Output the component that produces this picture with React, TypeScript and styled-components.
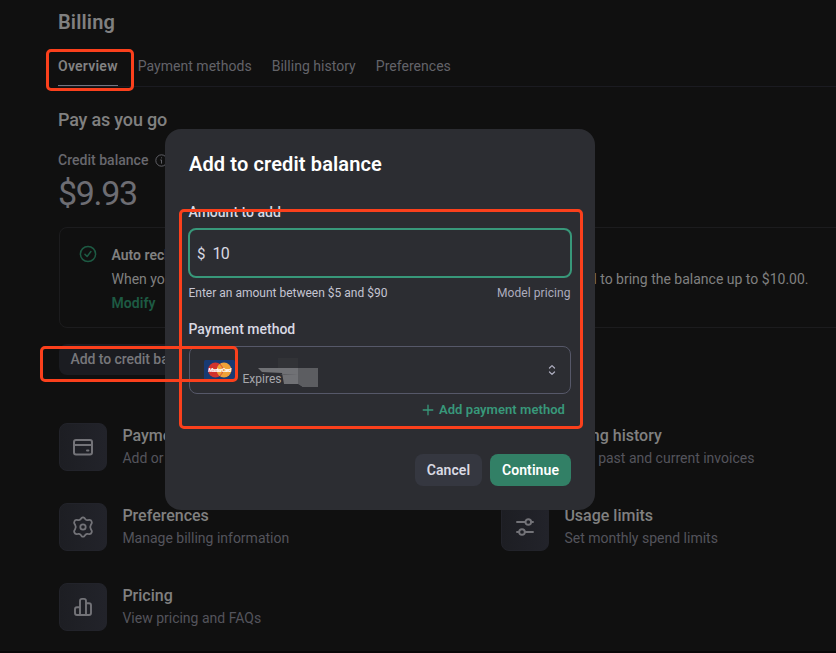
import React from 'react';
import styled, { createGlobalStyle } from 'styled-components';

const GlobalStyle = createGlobalStyle`
  * { box-sizing: border-box; }
  html, body { margin: 0; background: #101010; overflow: hidden; }
  body { font-family: Roboto, "Liberation Sans", sans-serif; font-size: 14px; line-height: 24px; color: #808080; }
  button, input { font: inherit; color: inherit; }
  h1, h2, h3, p { margin: 0; }
  svg { display: block; flex: none; }
`;

const Screen = styled.div`
  position: relative;
  width: 836px;
  height: 653px;
  overflow: hidden;
  background: #101010;
  border-bottom: 2px solid #080607;
`;

const Page = styled.main`
  display: flex;
  flex-direction: column;
  padding: 8px 0 0 58px;
  width: 945px;
`;

const Title = styled.h1`
  font-size: 20px;
  line-height: 28px;
  font-weight: 600;
  letter-spacing: 0.14px;
`;

const Tabs = styled.nav`
  display: flex;
  gap: 20px;
  height: 51px;
  padding-top: 18px;
  border-bottom: 1px solid #1b1b21;
`;

const Tab = styled.a<{ $active?: boolean }>`
  height: 32px;
  line-height: 24px;
  padding-bottom: 7px;
  font-weight: ${(p) => (p.$active ? 600 : 400)};
  letter-spacing: ${(p) => (p.$active ? 0.24 : 0.03)}px;
  color: ${(p) => (p.$active ? '#828282' : '#636369')};
  border-bottom: ${(p) => (p.$active ? '1px solid #747480' : '0')};
`;

const Section = styled.h2`
  margin-top: 19px;
  font-size: 18px;
  line-height: 28px;
  font-weight: 500;
  letter-spacing: -0.19px;
`;

const BalanceLabel = styled.div`
  display: flex;
  align-items: center;
  gap: 7px;
  margin-top: 14px;
  font-weight: 500;
  letter-spacing: 0.02px;
  color: #68686e;
`;

const Balance = styled.div`
  margin-top: 2px;
  font-size: 34px;
  line-height: 38px;
  letter-spacing: -1.3px;
  color: #6d6d73;
`;

const Recharge = styled.section`
  display: flex;
  gap: 14.5px;
  height: 101px;
  margin: 15px 0 0 1px;
  padding: 15px 19px;
  border: 1px solid #1c1c1e;
  border-radius: 8px;
`;

const RechargeBody = styled.div`
  display: flex;
  flex-direction: column;
`;

const RechargeTitle = styled.div`
  font-weight: 600;
`;

const RechargeText = styled.p`
  display: flex;
  justify-content: space-between;
  width: 697px;
  white-space: nowrap;
`;

const Modify = styled.a`
  font-weight: 600;
  letter-spacing: 0.06px;
  color: #1d5a43;
`;

const AddCredit = styled.button`
  align-self: flex-start;
  width: 160px;
  height: 31px;
  margin: 16px 0 0 1px;
  padding: 0 12px 1px 11.5px;
  border: 0;
  border-radius: 8px;
  background: #1b1c21;
  color: #77777b;
  font-weight: 500;
  letter-spacing: -0.06px;
  text-align: left;
  white-space: nowrap;
`;

const Links = styled.div`
  display: grid;
  grid-template-columns: 442px 442px;
  grid-auto-rows: 48px;
  row-gap: 32px;
  margin: 48px 0 0 1px;
`;

const LinkItem = styled.a`
  display: flex;
  gap: 15.4px;
`;

const IconTile = styled.div`
  display: flex;
  align-items: center;
  justify-content: center;
  width: 48px;
  height: 48px;
  border: 1px solid #22232a;
  border-radius: 8px;
  background: linear-gradient(90deg, #1d1e23, #22232a);
  color: #737378;
`;

const LinkText = styled.div`
  display: flex;
  flex-direction: column;
  padding-top: 1px;
  white-space: nowrap;
`;

const LinkTitle = styled.h3`
  font-size: 16px;
  line-height: 24px;
  font-weight: 500;
`;

const LinkNote = styled.p`
  margin-top: -2px;
  line-height: 24px;
  color: #54545c;
`;

const Modal = styled.section`
  position: absolute;
  left: 165px;
  top: 129px;
  display: flex;
  flex-direction: column;
  width: 430px;
  height: 381px;
  padding: 21px 24px 24px 23px;
  border-radius: 16px;
  background: #2c2d32;
  color: #d9d9e3;
`;

const ModalTitle = styled.h2`
  font-size: 20px;
  line-height: 28px;
  font-weight: 600;
  letter-spacing: 0.13px;
  padding-left: 1px;
  color: #ffffff;
`;

const Label = styled.label<{ $top: number }>`
  margin-top: ${(p) => p.$top}px;
  padding-left: 0.5px;
  font-weight: 500;
  line-height: 20px;
`;

const AmountField = styled.div`
  display: flex;
  align-items: center;
  gap: 7px;
  height: 50px;
  margin: 6px -1px 0 0;
  padding: 1px 7px 0;
  border: 2px solid #38987a;
  border-radius: 8px;
  font-size: 16px;
`;

const Currency = styled.span`
  font-size: 15px;
`;

const Amount = styled.input`
  width: 200px;
  padding: 0;
  border: 0;
  outline: 0;
  background: transparent;
  letter-spacing: -0.6px;
`;

const Hints = styled.div`
  display: flex;
  justify-content: space-between;
  margin-top: 5px;
  padding: 0 0.5px;
  font-size: 12px;
  line-height: 20px;
  color: #c5c5d2;
`;

const Pricing = styled.a`
  letter-spacing: 0.06px;
  color: #acacbe;
`;

const Method = styled.div`
  display: flex;
  align-items: center;
  height: 48px;
  margin: 7px 0 0 1px;
  padding: 0 14px;
  border: 1px solid #565869;
  border-radius: 8px;
`;

const CardInfo = styled.div`
  display: flex;
  flex: 1;
  align-self: stretch;
  align-items: flex-end;
  padding: 0 0 4px 7.5px;
  font-size: 12px;
  line-height: 20px;
  color: #a7a7ac;
`;

const Redaction = styled.svg`
  margin: 0 0 -2px -38.5px;
`;

const AddMethod = styled.a`
  display: flex;
  align-items: center;
  align-self: flex-end;
  gap: 5px;
  margin: 6px 6px 0 0;
  font-size: 13px;
  line-height: 20px;
  font-weight: 600;
  letter-spacing: 0.06px;
  color: #38987a;
`;

const Actions = styled.footer`
  display: flex;
  justify-content: flex-end;
  gap: 8px;
  margin-top: auto;
`;

const Button = styled.button<{ $primary?: boolean }>`
  width: ${(p) => (p.$primary ? 81 : 67)}px;
  height: 32px;
  padding: 0;
  border: 0;
  border-radius: 8px;
  background: ${(p) => (p.$primary ? '#328066' : '#353740')};
  color: ${(p) => (p.$primary ? '#ffffff' : '#d9d9e3')};
  font-weight: 600;
  letter-spacing: 0.07px;
`;

const Highlight = styled.div<{ $x: number; $y: number; $w: number; $h: number }>`
  position: absolute;
  left: ${(p) => p.$x}px;
  top: ${(p) => p.$y}px;
  width: ${(p) => p.$w}px;
  height: ${(p) => p.$h}px;
  border: 3px solid #fb401c;
  border-radius: 5px;
  pointer-events: none;
`;

const stroke = {
  fill: 'none',
  stroke: 'currentColor',
  strokeWidth: 2,
  strokeLinecap: 'round' as const,
  strokeLinejoin: 'round' as const,
};

const InfoIcon = () => (
  <svg width="13" height="13" viewBox="0 0 24 24" {...stroke} strokeWidth={1.7}>
    <circle cx="12" cy="12" r="10.5" />
    <path d="M10.5 11H12v6M12 7v.3" />
  </svg>
);

const CheckIcon = () => (
  <svg width="18" height="24" viewBox="0 0 18 24" {...stroke} stroke="#1d5a43" strokeWidth={1.5}>
    <circle cx="9" cy="11" r="7.6" />
    <path d="M6 11.4l2.1 2.1 3.8-5" />
  </svg>
);

const CardIcon = () => (
  <svg width="24" height="24" viewBox="0 0 24 24" {...stroke}>
    <rect x="3" y="5" width="18" height="14.5" rx="2" />
    <path d="M3 10h18M16 15.4h1.4" />
  </svg>
);

const GearIcon = () => (
  <svg width="24" height="24" viewBox="0 0 24 24" {...stroke} strokeWidth={1.8}>
    <path d="M10.4 3.2Q12 1.4 13.6 3.2L14.4 4.2Q15.4 5.4 17 5.1L18.3 4.9Q20 4.8 20.7 6.6Q21.2 7.8 20.4 8.9L19.9 9.7Q18.5 12 19.9 14.3L20.4 15.1Q21.2 16.2 20.7 17.4Q20 19.2 18.3 19.1L17 18.9Q15.4 18.6 14.4 19.8L13.6 20.8Q12 22.6 10.4 20.8L9.6 19.8Q8.6 18.6 7 18.9L5.7 19.1Q4 19.2 3.3 17.4Q2.8 16.2 3.6 15.1L4.1 14.3Q5.5 12 4.1 9.7L3.6 8.9Q2.8 7.8 3.3 6.6Q4 4.8 5.7 4.9L7 5.1Q8.6 5.4 9.6 4.2Z" />
    <circle cx="12" cy="12" r="2.7" />
  </svg>
);

const ChartIcon = () => (
  <svg width="24" height="24" viewBox="0 0 24 24" {...stroke} strokeWidth={1.9}>
    <path d="M9 20V5.9a2 2 0 0 1 2-2h2a2 2 0 0 1 2 2V20M9 12.2H6a2 2 0 0 0-2 2V18a2 2 0 0 0 2 2h12a2 2 0 0 0 2-2v-7.8a2 2 0 0 0-2-2h-3" />
  </svg>
);

const SlidersIcon = () => (
  <svg width="24" height="24" viewBox="0 0 24 24" {...stroke} strokeWidth={1.9}>
    <path d="M4 7h8M19 7h1M4 17h2M12 17h8" />
    <circle cx="15.3" cy="7" r="2.8" />
    <circle cx="9" cy="17" r="2.8" />
  </svg>
);

const CardLogo = () => (
  <svg width="31" height="20" viewBox="0 0 31 20">
    <rect width="31" height="20" rx="1.5" fill="#183a72" />
    <circle cx="11.4" cy="10" r="7.4" fill="#d2332d" />
    <circle cx="20" cy="10" r="7.4" fill="#eda139" />
    <path d="M15.7 4a7.4 7.4 0 0 1 0 12" fill="none" stroke="#d2332d" strokeWidth=".8" />
    <text x="15.8" y="12.2" fontFamily="Roboto, sans-serif" fontSize="5.6" fontWeight="900" fontStyle="italic" fill="#fff" textAnchor="middle" textLength="23">MasterCard</text>
  </svg>
);

const links = [
  { title: 'Payment methods', note: 'Add or change payment method', icon: <CardIcon /> },
  { title: 'Billing history', note: 'View past and current invoices', icon: <CardIcon /> },
  { title: 'Preferences', note: 'Manage billing information', icon: <GearIcon /> },
  { title: 'Usage limits', note: 'Set monthly spend limits', icon: <SlidersIcon /> },
  { title: 'Pricing', note: 'View pricing and FAQs', icon: <ChartIcon /> },
];

export default function App() {
  return (
    <Screen>
      <GlobalStyle />
      <Page>
        <Title>Billing</Title>
        <Tabs>
          <Tab $active>Overview</Tab>
          <Tab>Payment methods</Tab>
          <Tab>Billing history</Tab>
          <Tab>Preferences</Tab>
        </Tabs>
        <Section>Pay as you go</Section>
        <BalanceLabel>Credit balance <InfoIcon /></BalanceLabel>
        <Balance>$9.93</Balance>
        <Recharge>
          <CheckIcon />
          <RechargeBody>
            <RechargeTitle>Auto recharge is on</RechargeTitle>
            <RechargeText>
              <span>When your credit balance reaches $5.00,</span>
              <span>your card will be charged to bring the balance up to $10.00.</span>
            </RechargeText>
            <Modify>Modify</Modify>
          </RechargeBody>
        </Recharge>
        <AddCredit>Add to credit balance</AddCredit>
        <Links>
          {links.map((link) => (
            <LinkItem key={link.title}>
              <IconTile>{link.icon}</IconTile>
              <LinkText>
                <LinkTitle>{link.title}</LinkTitle>
                <LinkNote>{link.note}</LinkNote>
              </LinkText>
            </LinkItem>
          ))}
        </Links>
      </Page>

      <Modal>
        <ModalTitle>Add to credit balance</ModalTitle>
        <Label $top={24}>Amount to add</Label>
        <AmountField>
          <Currency>$</Currency>
          <Amount defaultValue="10" />
        </AmountField>
        <Hints>
          <span>Enter an amount between $5 and $90</span>
          <Pricing>Model pricing</Pricing>
        </Hints>
        <Label $top={16}>Payment method</Label>
        <Method>
          <CardLogo />
          <CardInfo>
            <span>Expires</span>
            <Redaction width="82" height="34" viewBox="0 0 82 34">
              <path d="M35 1h20v11H35z" fill="#323337" />
              <path d="M15 11h60v19H60l-4-3H41l-2-11-20-1z" fill="#707175" />
              <path d="M37 17h18l-14 1z" fill="#5c5d61" />
              <path d="M55 11h20v19H60l-5-3z" fill="#5c5d61" />
            </Redaction>
          </CardInfo>
          <svg width="8" height="12" viewBox="0 0 8 12" {...stroke} strokeWidth={1.3} stroke="#acacbe">
            <path d="M1.5 4L4 1.6 6.5 4M1.5 8L4 10.4 6.5 8" />
          </svg>
        </Method>
        <AddMethod>
          <svg width="12" height="12" viewBox="0 0 12 12" {...stroke} strokeWidth={1.3}>
            <path d="M6 1.2v9.6M1.2 6h9.6" />
          </svg>
          Add payment method
        </AddMethod>
        <Actions>
          <Button>Cancel</Button>
          <Button $primary>Continue</Button>
        </Actions>
      </Modal>

      <Highlight $x={46} $y={49} $w={88} $h={42} />
      <Highlight $x={179} $y={209} $w={404} $h={220} />
      <Highlight $x={40} $y={346} $w={198} $h={36} />
    </Screen>
  );
}
